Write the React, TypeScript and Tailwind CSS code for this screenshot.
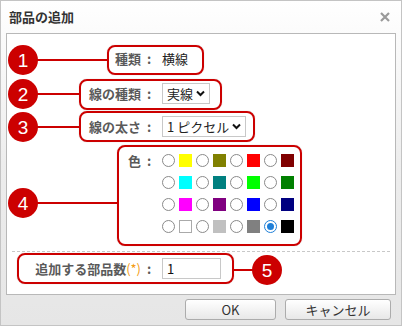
import React from 'react';

const RED = '#cc0000';

const swatchRows: string[][] = [
  ['#ffff00', '#808000', '#ff0000', '#800000'],
  ['#00ffff', '#008080', '#00ff00', '#008000'],
  ['#ff00ff', '#800080', '#0000ff', '#000080'],
  ['#ffffff', '#c0c0c0', '#808080', '#000000'],
];

function Radio({ checked }: { checked?: boolean }) {
  return checked ? (
    <span className="flex h-[13px] w-[13px] items-center justify-center rounded-full border border-[#1e7fd8] bg-white">
      <span className="h-[7px] w-[7px] rounded-full bg-[#1e7fd8]" />
    </span>
  ) : (
    <span className="h-[13px] w-[13px] rounded-full border border-[#8a8a8a] bg-white" />
  );
}

function Chevron() {
  return (
    <svg width="9" height="7" viewBox="0 0 9 7" className="ml-[3px]">
      <path d="M1 1.5 L4.5 5 L8 1.5" fill="none" stroke="#111" strokeWidth="2" />
    </svg>
  );
}

function Label({ children }: { children: React.ReactNode }) {
  return (
    <div className="flex w-[134px] shrink-0 justify-end font-bold text-[#5a5a5a]">{children}</div>
  );
}

function Colon() {
  return <div className="w-[21px] shrink-0 pl-[6px] font-bold text-[#5a5a5a]">:</div>;
}

function Badge({ n, left, top }: { n: number; left: number; top: number }) {
  return (
    <div
      className="absolute flex h-[30px] w-[30px] items-center justify-center rounded-full bg-[#cc0000] text-[19px] leading-none text-white"
      style={{ left, top, fontFamily: '"Liberation Sans", Arial, sans-serif' }}
    >
      {n}
    </div>
  );
}

function Frame({ left, top, w, h }: { left: number; top: number; w: number; h: number }) {
  return (
    <div
      className="pointer-events-none absolute rounded-[8px] border-2 border-[#cc0000] shadow-[0_0_1px_rgba(0,0,0,0.3)]"
      style={{ left, top, width: w, height: h }}
    />
  );
}

function Line({ x1, x2, y }: { x1: number; x2: number; y: number }) {
  return <div className="absolute h-[2px]" style={{ left: x1, top: y - 1, width: x2 - x1, background: RED }} />;
}

export default function App() {
  return (
    <div
      className="relative h-[326px] w-[402px] overflow-hidden border border-[#c4c4c4] bg-gradient-to-b from-[#ffffff] via-[#ededed] to-[#e6e6e6] text-[13px]"
      style={{ fontFamily: '"Noto Sans CJK JP", "Noto Sans", sans-serif' }}
    >
      {/* title bar */}
      <div className="flex h-[32px] items-center justify-between pl-[8px] pr-[11px]">
        <span className="text-[13px] font-bold text-[#333]">部品の追加</span>
        <svg width="10" height="10" viewBox="0 0 10 10">
          <path d="M1 1 L9 9 M9 1 L1 9" stroke="#9a9a9a" strokeWidth="2.2" />
        </svg>
      </div>

      {/* content panel */}
      <div className="mx-[5px] h-[262px] border border-[#b8b8b8] bg-white pt-[14px] leading-none">
        <div className="flex h-[20px] items-center">
          <Label>種類</Label>
          <Colon />
          <span className="text-[#222]">横線</span>
        </div>

        <div className="mt-[14px] flex h-[22px] items-center">
          <Label>線の種類</Label>
          <Colon />
          <div className="flex h-[21px] items-center border border-[#c8c8c8] bg-white px-[4px] text-[#222]">
            実線
            <Chevron />
          </div>
        </div>

        <div className="mt-[11px] flex h-[22px] items-center">
          <Label>線の太さ</Label>
          <Colon />
          <div className="flex h-[21px] items-center border border-[#c8c8c8] bg-white px-[4px] text-[#222]">
            1 ピクセル
            <Chevron />
          </div>
        </div>

        <div className="mt-[12px] flex">
          <Label>
            <span className="flex h-[22px] items-center">色</span>
          </Label>
          <div className="flex h-[22px] w-[21px] shrink-0 items-center pl-[6px] font-bold text-[#5a5a5a]">:</div>
          <div className="flex flex-col">
            {swatchRows.map((row, ri) => (
              <div key={ri} className="flex h-[22px] items-center gap-[4px]">
                {row.map((c, ci) => (
                  <React.Fragment key={ci}>
                    <Radio checked={ri === 3 && ci === 3} />
                    <span
                      className={`h-[13px] w-[13px] ${c === '#ffffff' ? 'border border-[#aaa]' : ''}`}
                      style={{ background: c }}
                    />
                  </React.Fragment>
                ))}
              </div>
            ))}
          </div>
        </div>

        <div className="mx-[5px] mt-[14px] border-t border-dashed border-[#c8c8c8]" />

        <div className="mt-[5px] flex h-[22px] items-center">
          <Label>
            追加する部品数<span className="font-normal text-[#f39c12]">(*)</span>
          </Label>
          <Colon />
          <div className="flex h-[21px] w-[59px] items-center border border-[#c8c8c8] bg-white px-[4px] text-[#111]">
            1
          </div>
        </div>
      </div>

      {/* footer */}
      <div className="flex justify-end gap-[9px] pr-[10px] pt-[4px]">
        <button className="h-[21px] w-[91px] rounded-[3px] border border-[#acacac] bg-gradient-to-b from-[#ffffff] to-[#e8e8e8] text-[13px] leading-none text-[#333]">
          OK
        </button>
        <button className="h-[21px] w-[106px] rounded-[3px] border border-[#acacac] bg-gradient-to-b from-[#ffffff] to-[#e8e8e8] text-[13px] leading-none text-[#333]">
          キャンセル
        </button>
      </div>

      {/* annotations */}
      <Line x1={36} x2={107} y={59} />
      <Line x1={36} x2={79} y={93} />
      <Line x1={36} x2={79} y={126} />
      <Line x1={36} x2={117} y={202} />
      <Line x1={232} x2={252} y={269} />
      <Frame left={106} top={44} w={97} h={30} />
      <Frame left={78} top={78} w={143} h={31} />
      <Frame left={78} top={110} w={176} h={31} />
      <Frame left={116} top={144} w={185} h={101} />
      <Frame left={16} top={252} w={217} h={31} />
      <Badge n={1} left={7} top={44} />
      <Badge n={2} left={7} top={78} />
      <Badge n={3} left={7} top={111} />
      <Badge n={4} left={7} top={187} />
      <Badge n={5} left={251} top={254} />
    </div>
  );
}
